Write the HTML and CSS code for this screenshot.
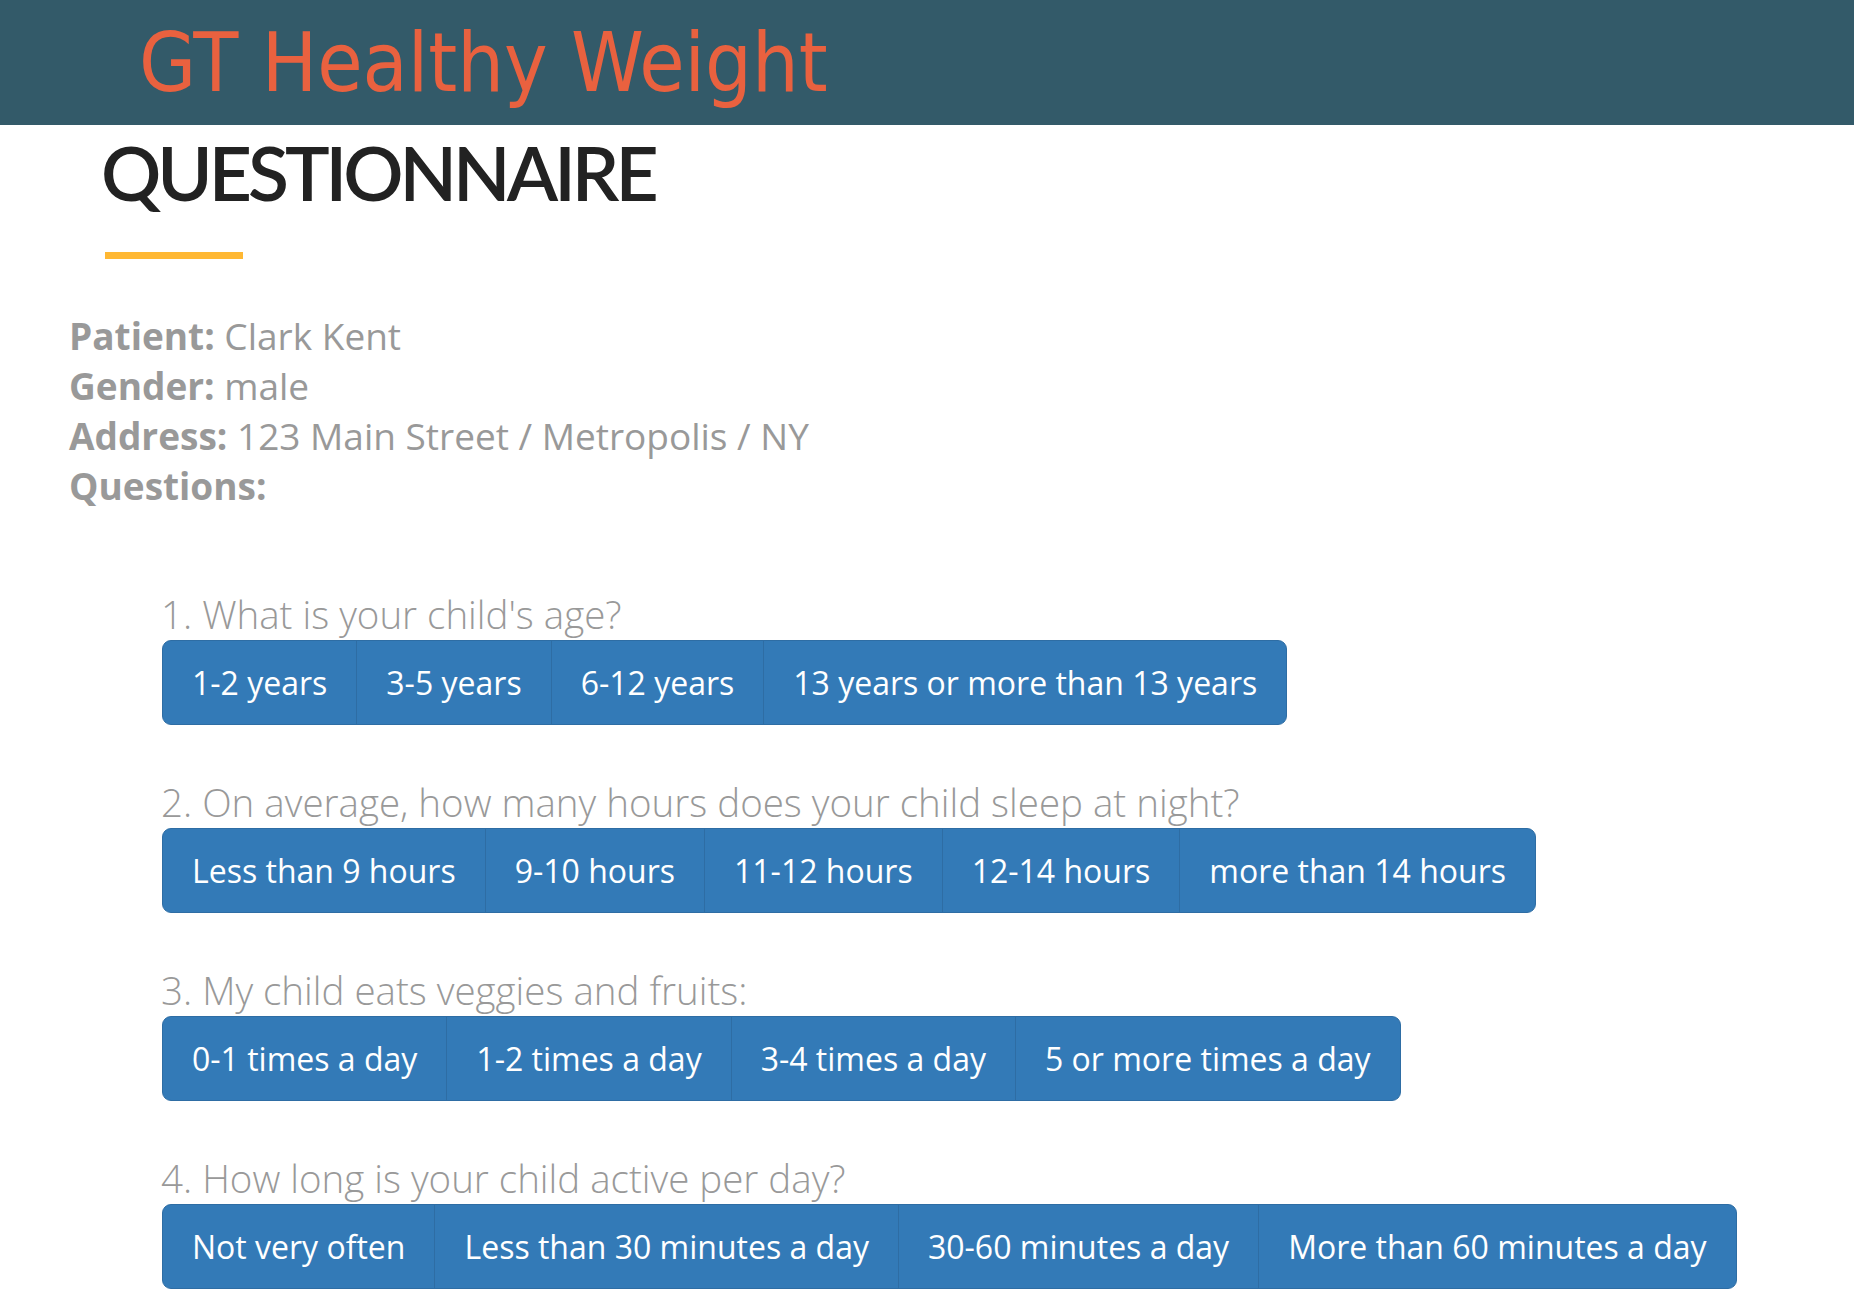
FILE: index.html
```html
<!DOCTYPE html>
<html lang="en">
<head>
<meta charset="utf-8">
<title>GT Healthy Weight - Questionnaire</title>
<link rel="stylesheet" href="styles.css">
</head>
<body>
<header class="topbar">
  <h1 class="brand">GT Healthy Weight</h1>
</header>
<main class="page">
  <h2 class="page-title">QUESTIONNAIRE</h2>
  <div class="title-rule"></div>
  <div class="info">
    <div><b>Patient:</b> Clark Kent</div>
    <div><b>Gender:</b> male</div>
    <div><b>Address:</b> 123 Main Street / Metropolis / NY</div>
    <div><b>Questions:</b></div>
  </div>
  <section class="questions">
    <div class="question">
      <div class="q-label">1. What is your child's age?</div>
      <div class="btn-group">
        <button class="btn">1-2 years</button><button class="btn">3-5 years</button><button class="btn">6-12 years</button><button class="btn">13 years or more than 13 years</button>
      </div>
    </div>
    <div class="question">
      <div class="q-label">2. On average, how many hours does your child sleep at night?</div>
      <div class="btn-group">
        <button class="btn">Less than 9 hours</button><button class="btn">9-10 hours</button><button class="btn">11-12 hours</button><button class="btn">12-14 hours</button><button class="btn">more than 14 hours</button>
      </div>
    </div>
    <div class="question">
      <div class="q-label">3. My child eats veggies and fruits:</div>
      <div class="btn-group">
        <button class="btn">0-1 times a day</button><button class="btn">1-2 times a day</button><button class="btn">3-4 times a day</button><button class="btn">5 or more times a day</button>
      </div>
    </div>
    <div class="question">
      <div class="q-label">4. How long is your child active per day?</div>
      <div class="btn-group">
        <button class="btn">Not very often</button><button class="btn">Less than 30 minutes a day</button><button class="btn">30-60 minutes a day</button><button class="btn">More than 60 minutes a day</button>
      </div>
    </div>
  </section>
</main>
</body>
</html>
```
FILE: styles.css
```css
html, body {
  margin: 0;
  padding: 0;
  background: #ffffff;
}
body {
  font-family: "Open Sans", "Liberation Sans", sans-serif;
  color: #999999;
}
.topbar {
  height: 125px;
  background: #335a69;
  padding-left: 139px;
}
.brand {
  margin: 0;
  font-family: "DejaVu Sans", sans-serif;
  font-stretch: condensed;
  font-weight: 400;
  font-size: 82px;
  line-height: 125px;
  color: #e9613f;
}
.page {
  display: flex;
  flex-direction: column;
}
.page-title {
  margin: 10px 0 0 101px;
  font-family: "Lato", "Open Sans", sans-serif;
  font-weight: 600;
  font-size: 75px;
  line-height: 75px;
  letter-spacing: -4px;
  color: #222222;
}
.title-rule {
  margin: 42px 0 0 105px;
  width: 138px;
  height: 7px;
  background: #ffb833;
}
.info {
  margin: 52px 0 0 69px;
  font-size: 37px;
  line-height: 50px;
  color: #999999;
}
.info b {
  font-weight: 700;
}
.questions {
  margin: 81px 0 0 162px;
  display: flex;
  flex-direction: column;
  gap: 55px;
}
.question {
  display: flex;
  flex-direction: column;
  align-items: flex-start;
}
.q-label {
  font-weight: 300;
  font-size: 38.5px;
  line-height: 44px;
  color: #999999;
  margin: 0 0 4px -1px;
}
.btn-group {
  display: inline-flex;
}
.btn {
  font-family: "Open Sans", "Liberation Sans", sans-serif;
  font-size: 32px;
  line-height: 43px;
  font-weight: 400;
  color: #ffffff;
  background: #337ab7;
  border: 1px solid #2e6da4;
  padding: 20px 29px;
  margin: 0 0 0 -1px;
  border-radius: 0;
  white-space: nowrap;
}
.btn:first-child {
  margin-left: 0;
  border-radius: 9px 0 0 9px;
}
.btn:last-child {
  border-radius: 0 9px 9px 0;
}
```
